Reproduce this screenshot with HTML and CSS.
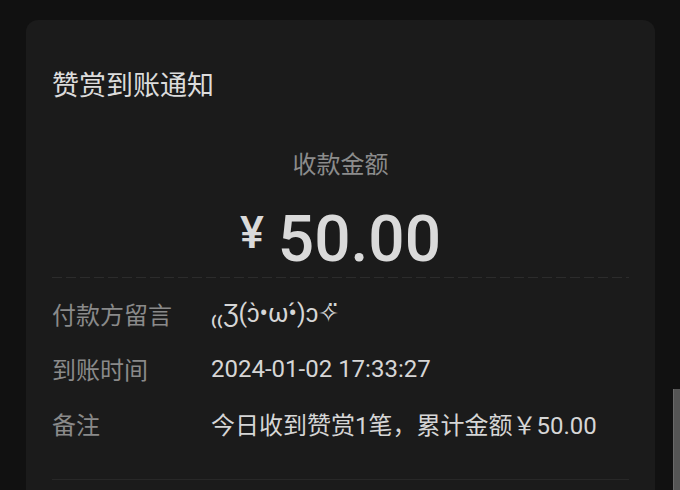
FILE: index.html
```html
<!DOCTYPE html>
<html lang="zh-CN">
<head>
<meta charset="utf-8">
<link rel="stylesheet" href="styles.css">
</head>
<body>
<div class="card">
  <div class="title">赞赏到账通知</div>
  <div class="sub">收款金额</div>
  <div class="amount"><span class="yen">¥</span><span class="num">50.00</span></div>
  <div class="dash"></div>
  <div class="rows">
    <div class="row"><span class="label">付款方留言</span><span class="value kao">₍₍Ʒ(ɔ̀•ω•́)ɔ✧̈</span></div>
    <div class="row"><span class="label">到账时间</span><span class="value">2024-01-02 17:33:27</span></div>
    <div class="row"><span class="label">备注</span><span class="value">今日收到赞赏1笔，累计金额<span class="fw">￥</span>50.00</span></div>
  </div>
  <div class="line"></div>
</div>
<div class="thumb"></div>
</body>
</html>
```
FILE: styles.css
```css
html, body {
  margin: 0;
  padding: 0;
  background: #111111;
  height: 100%;
  overflow: hidden;
}
body {
  font-family: Roboto, "Noto Sans CJK SC", sans-serif;
}
.card {
  margin: 20px 25px 0 26px;
  background: #1b1b1b;
  border-radius: 12px;
  padding: 46px 26px 0 26px;
  height: 600px;
}
.title {
  font-size: 27px;
  line-height: 36px;
  color: #dcdcdc;
  font-family: "Noto Sans CJK SC", sans-serif;
}
.sub {
  margin-top: 45px;
  font-size: 24px;
  line-height: 32px;
  color: #8c8c8c;
  text-align: center;
  font-family: "Noto Sans CJK SC", sans-serif;
}
.amount {
  margin-top: 26px;
  height: 70px;
  line-height: 70px;
  text-align: center;
  color: #dadada;
  font-size: 64px;
  font-weight: 500;
}
.yen {
  font-size: 45px;
  line-height: 1;
  margin-right: 14px;
  vertical-align: 13px;
}
.num {
  font-size: 64px;
}
.dash {
  margin-top: 2px;
  height: 1px;
  background: repeating-linear-gradient(to right, #2c2c2c 0 10px, transparent 10px 14px);
}
.rows {
  margin-top: 8px;
}
.row {
  display: flex;
  height: 55px;
  align-items: center;
  font-size: 24px;
}
.label {
  width: 159px;
  flex: none;
  color: #8a8a8a;
  font-family: "Noto Sans CJK SC", sans-serif;
}
.value {
  color: #d6d6d6;
}
.kao {
  font-size: 25px;
}
.fw {
  font-family: "Noto Sans CJK SC", sans-serif;
}
.line {
  margin-top: 28px;
  height: 1px;
  background: #282828;
}
.thumb {
  position: fixed;
  left: 673px;
  top: 389px;
  width: 6px;
  height: 110px;
  background: #555555;
  border-left: 1px solid #6a6a6a;
}
```
